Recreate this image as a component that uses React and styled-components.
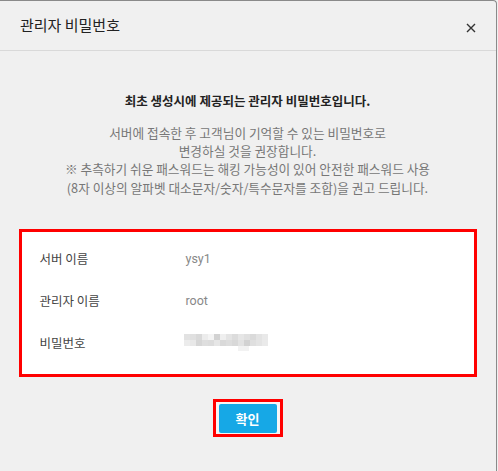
import React from "react";
import styled, { createGlobalStyle } from "styled-components";

const GlobalStyle = createGlobalStyle`
	html, body {
		margin: 0;
		padding: 0;
		background: #f0f0f0;
		overflow: hidden;
	}
	body {
		font-family: "Noto Sans CJK KR", "Noto Sans", sans-serif;
	}
`;

const Dialog = styled.div`
	box-sizing: border-box;
	width: 498px;
	height: 471px;
	margin-left: -1px;
	background: #f0f0f0;
	border-top: 1px solid #8a8a8a;
	border-right: 1px solid #8a8a8a;
	border-top-right-radius: 4px;
	display: flex;
	flex-direction: column;
`;

const Header = styled.div`
	height: 49px;
	display: flex;
	align-items: center;
	justify-content: space-between;
	padding: 0 19px 0 21px;
	border-bottom: 1px solid #d9d9d9;
`;

const Title = styled.h2`
	margin: 0;
	font-size: 15px;
	font-weight: 400;
	color: #222;
	line-height: 1;
	margin-top: -2px;
`;

const CloseButton = styled.button`
	border: 0;
	background: none;
	padding: 0;
	width: 12px;
	height: 12px;
	margin-top: 4px;
	display: flex;
	align-items: center;
	justify-content: center;
	cursor: pointer;
`;

const Body = styled.div`
	padding: 41px 0 0;
	display: flex;
	flex-direction: column;
	align-items: center;
`;

const Lead = styled.p`
	margin: 0;
	font-size: 12.5px;
	font-weight: 700;
	line-height: 18px;
	color: #222;
	text-align: center;
`;

const Notice = styled.p`
	margin: 14px 0 0;
	font-size: 12.7px;
	line-height: 18.2px;
	color: #777;
	text-align: center;
`;

const InfoBox = styled.div`
	box-sizing: border-box;
	width: 458px;
	margin-top: 32px;
	border: 3px solid #ff0000;
	background: #fff;
	padding: 6px 18px 10px;
`;

const Row = styled.div`
	display: grid;
	grid-template-columns: 147px 1fr;
	align-items: center;
	height: 42px;
	font-size: 12.5px;
`;

const Label = styled.span`
	color: #444;
`;

const Value = styled.span`
	font-family: Roboto, "Noto Sans CJK KR", sans-serif;
	font-size: 12.5px;
	color: #888;
	margin-left: -1px;
`;

const ButtonFrame = styled.div`
	margin-top: 22px;
	border: 3px solid #ff0000;
	padding: 2px 3px 1px;
	background: #f6f6f6;
`;

const ConfirmButton = styled.button`
	width: 58px;
	height: 29px;
	border: 0;
	border-radius: 2px;
	background: #16a8e6;
	color: #fff;
	font-family: "Noto Sans CJK KR", sans-serif;
	font-size: 13px;
	font-weight: 700;
	display: block;
	cursor: pointer;
`;

const blurCols = [
	"#e2e2e2", "#e0e0e0", "#d9d9d9", "#ececec", "#f4f4f4", "#d2d2d2", "#efefef",
	"#e4e4e4", "#dcdcdc", "#e6e6e6", "#e0e0e0", "#dadada", "#e3e3e3", "#e9e9e9",
];
const blurCols2 = [
	"#ececec", "#e8e8e8", "#d6d6d6", "#dedede", "#dcdcdc", "#e6e6e6", "#d9d9d9",
	"#dddddd", "#d8d8d8", "#e2e2e2", "#d2d2d2", "#dfdfdf", "#e4e4e4", "#eaeaea",
];

const BlurredPassword = () => (
	<svg width="86" height="20" viewBox="0 0 86 20" style={{ display: "block", marginLeft: -3 }}>
		{blurCols.map((c, i) => (
			<rect key={"a" + i} x={i * 6} y={1} width={6} height={6} fill={c} />
		))}
		{blurCols2.map((c, i) => (
			<rect key={"b" + i} x={i * 6} y={7} width={6} height={6} fill={c} />
		))}
		<rect x={54} y={13} width={11} height={5} fill="#f2f2f2" />
	</svg>
);

const rows = [
	{ label: "서버 이름", value: "ysy1" },
	{ label: "관리자 이름", value: "root" },
];

const App = () => (
	<>
		<GlobalStyle />
		<Dialog>
			<Header>
				<Title>관리자 비밀번호</Title>
				<CloseButton aria-label="닫기">
					<svg width="10" height="10" viewBox="0 0 10 10">
						<path d="M1 1L9 9M9 1L1 9" stroke="#333" strokeWidth="1.4" />
					</svg>
				</CloseButton>
			</Header>
			<Body>
				<Lead>최초 생성시에 제공되는 관리자 비밀번호입니다.</Lead>
				<Notice>
					서버에 접속한 후 고객님이 기억할 수 있는 비밀번호로
					<br />
					변경하실 것을 권장합니다.
					<br />
					※ 추측하기 쉬운 패스워드는 해킹 가능성이 있어 안전한 패스워드 사용
					<br />
					(8자 이상의 알파벳 대소문자/숫자/특수문자를 조합)을 권고 드립니다.
				</Notice>
				<InfoBox>
					{rows.map((r) => (
						<Row key={r.label}>
							<Label>{r.label}</Label>
							<Value>{r.value}</Value>
						</Row>
					))}
					<Row>
						<Label>비밀번호</Label>
						<BlurredPassword />
					</Row>
				</InfoBox>
				<ButtonFrame>
					<ConfirmButton>확인</ConfirmButton>
				</ButtonFrame>
			</Body>
		</Dialog>
	</>
);

export default App;
